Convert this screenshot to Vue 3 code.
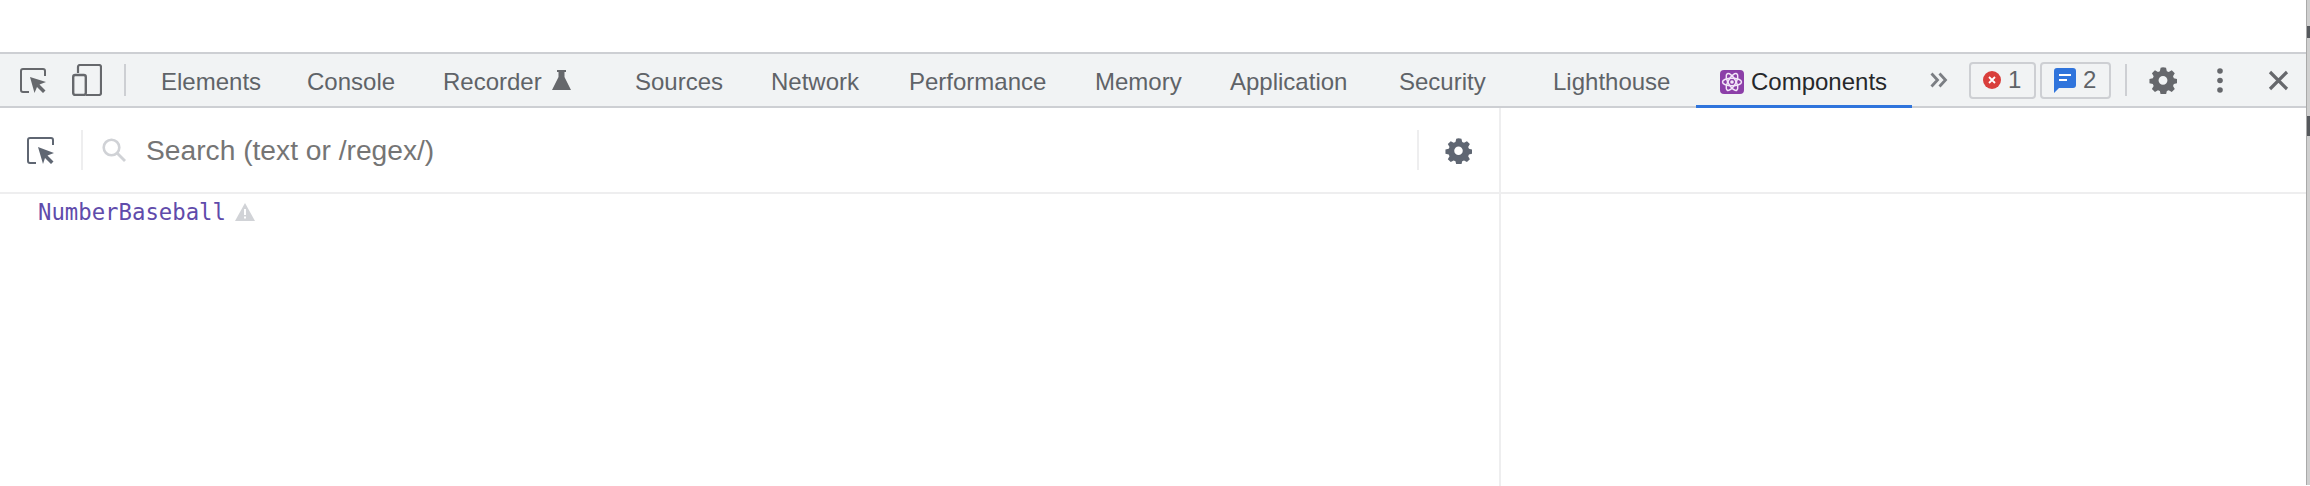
<template>
  <div class="page">
    <div class="window">
      <div class="top-gap"></div>
      <div class="toolbar">
        <button class="tool-btn first">
          <svg width="26" height="25" viewBox="0 0 26 25">
            <path d="M9 24H3a2 2 0 0 1-2-2V3a2 2 0 0 1 2-2h20a2 2 0 0 1 2 2v5" fill="none" stroke="#66686c" stroke-width="2" />
            <path d="M10 9l16 5-6.500 2.500 6 6-2.500 2.500-6-6L14.500 25z" fill="#66686c" />
          </svg>
        </button>
        <button class="tool-btn device">
          <svg width="30" height="32" viewBox="0 0 30 32">
            <path d="M6 9V3a2 2 0 0 1 2-2h19a2 2 0 0 1 2 2v26a2 2 0 0 1-2 2H14" fill="none" stroke="#66686c" stroke-width="2.200" />
            <rect x="1.200" y="11" width="12.600" height="20" rx="2" fill="none" stroke="#66686c" stroke-width="2.400" />
          </svg>
        </button>
        <span class="sep"></span>

        <nav class="tabs">
          <a v-for="tab in tabs" :key="tab.name" class="tab" :class="tab.cls">
            <svg v-if="tab.react" class="react" width="24" height="24" viewBox="0 0 24 24">
              <rect width="24" height="24" rx="4" fill="#8c3fa8" />
              <g fill="none" stroke="#f3e6f8" stroke-width="1.500">
                <ellipse cx="12" cy="12" rx="9.500" ry="3.800" />
                <ellipse cx="12" cy="12" rx="9.500" ry="3.800" transform="rotate(60 12 12)" />
                <ellipse cx="12" cy="12" rx="9.500" ry="3.800" transform="rotate(120 12 12)" />
              </g>
              <circle cx="12" cy="12" r="1.800" fill="#f3e6f8" />
            </svg>
            {{ tab.name }}
            <svg v-if="tab.flask" class="flask" width="19" height="20" viewBox="0 0 19 20">
              <path d="M5 0h9v2h-1.500v5L19 20H0L6.500 7V2H5z" fill="#66686c" />
            </svg>
          </a>
        </nav>

        <div class="right-tools">
          <svg class="chevrons" width="18" height="16" viewBox="0 0 18 16">
            <path d="M1.500 1.500L7.500 8l-6 6.500M9.500 1.500L15.500 8l-6 6.500" fill="none" stroke="#7b7e83" stroke-width="2.800" />
          </svg>
          <div class="counter errors">
            <svg width="18" height="18" viewBox="0 0 18 18">
              <circle cx="9" cy="9" r="9" fill="#d93f3c" />
              <path d="M6 6l6 6M12 6l-6 6" stroke="#fff" stroke-width="1.800" />
            </svg>
            <span>1</span>
          </div>
          <div class="counter messages">
            <svg width="22" height="25" viewBox="0 0 22 25">
              <path d="M3 0h16a3 3 0 0 1 3 3v14a3 3 0 0 1-3 3H5l-5 5V3a3 3 0 0 1 3-3z" fill="#2f74dc" />
              <path d="M5 7h12M5 12h8" stroke="#fff" stroke-width="2" />
            </svg>
            <span>2</span>
          </div>
          <span class="sep right-sep"></span>
          <svg class="gear" width="28" height="28" viewBox="0 0 24 24">
            <path :d="gearPath" fill="#66686c" fill-rule="evenodd" />
          </svg>
          <svg class="dots" width="8" height="25" viewBox="0 0 8 25">
            <circle cx="4" cy="3" r="2.800" fill="#66686c" />
            <circle cx="4" cy="12.500" r="2.800" fill="#66686c" />
            <circle cx="4" cy="22" r="2.800" fill="#66686c" />
          </svg>
          <svg class="close" width="21" height="21" viewBox="0 0 21 21">
            <path d="M2 2l17 17M19 2L2 19" stroke="#66686c" stroke-width="3.200" />
          </svg>
        </div>
      </div>

      <div class="panels">
        <section class="tree-panel">
          <div class="search-bar">
            <svg class="inspect" width="27" height="27" viewBox="0 0 27 27">
              <path d="M9 26H3a2 2 0 0 1-2-2V3a2 2 0 0 1 2-2h21a2 2 0 0 1 2 2v5" fill="none" stroke="#5f6672" stroke-width="2" />
              <path d="M11 10l16 6-6.500 2.500 6 6-2.500 2.500-6-6-2 6z" fill="#5f6672" />
            </svg>
            <span class="search-sep"></span>
            <svg class="glass" width="24" height="24" viewBox="0 0 24 24">
              <circle cx="9.500" cy="9.500" r="7.800" fill="none" stroke="#d0d2d6" stroke-width="2.600" />
              <path d="M15 15l8 8" stroke="#d0d2d6" stroke-width="2.800" />
            </svg>
            <span class="search-text">Search (text or /regex/)</span>
            <span class="search-sep end"></span>
            <svg class="search-gear" width="27" height="27" viewBox="0 0 24 24">
              <path :d="gearPath" fill="#5f6672" fill-rule="evenodd" />
            </svg>
          </div>
          <div class="tree">
            <span class="node-name">NumberBaseball</span>
            <svg class="warn" width="20" height="18" viewBox="0 0 20 18">
              <path d="M10 0l10 18H0z" fill="#d1d3d7" />
              <path d="M9 6h2v6H9zM9 13.500h2v2H9z" fill="#fff" />
            </svg>
          </div>
        </section>
        <section class="props-panel">
          <div class="props-head"></div>
        </section>
      </div>
    </div>
    <div class="edge"></div>
  </div>
</template>

<script setup>
const tabs = [
  { name: 'Elements' },
  { name: 'Console' },
  { name: 'Recorder', flask: true },
  { name: 'Sources' },
  { name: 'Network' },
  { name: 'Performance' },
  { name: 'Memory' },
  { name: 'Application' },
  { name: 'Security' },
  { name: 'Lighthouse' },
  { name: 'Components', react: true, cls: 'active' },
]

const gearPath =
  'M12 1l2.600.6.700 2.900 1.600.7 2.600-1.500 2.600 2.600-1.500 2.500.7 1.700 2.900.7v3.600l-2.900.7-.7 1.700 1.500 2.500-2.600 2.600-2.600-1.500-1.600.7-.7 2.900H10l-.7-2.900-1.600-.7-2.600 1.500-2.600-2.600 1.500-2.500-.7-1.700-2.900-.7v-3.600l2.900-.7.700-1.700-1.500-2.500 2.600-2.600 2.600 1.500 1.600-.7.700-2.900zM12 8.500a3.800 3.800 0 1 0 0 7.600 3.800 3.800 0 0 0 0-7.600z'
</script>

<style scoped>
.page {
  display: flex;
  width: 2310px;
  height: 486px;
  background: #fff;
  font-family: "Liberation Sans", Arial, sans-serif;
}

.window {
  width: 2306px;
  display: flex;
  flex-direction: column;
}

/* sliver of the window behind, cut off at the edge of the shot */
.edge {
  width: 4px;
  height: 485px;
  border-left: 1px solid #a9a9a9;
  box-sizing: border-box;
  background:
    linear-gradient(#55585c, #55585c) 0 26px / 3px 12px no-repeat,
    linear-gradient(#55585c, #55585c) 0 116px / 3px 20px no-repeat,
    #cfcfcf;
}

.top-gap {
  height: 52px;
}

.toolbar {
  height: 52px;
  box-sizing: content-box;
  display: flex;
  align-items: center;
  background: #f1f3f4;
  border-top: 2px solid #cdcfd3;
  border-bottom: 2px solid #cdcfd3;
}

.tool-btn {
  padding: 0;
  border: none;
  background: none;
  display: flex;
}

.tool-btn.first {
  margin-left: 20px;
}

.tool-btn.device {
  margin-left: 26px;
}

.sep {
  width: 2px;
  height: 32px;
  margin-left: 22px;
  background: #cdcfd3;
}

.tabs {
  display: grid;
  grid-template-columns: 146px 136px 192px 136px 138px 186px 135px 169px 154px 167px 216px;
  height: 100%;
  margin-left: 11px;
}

.tab {
  display: flex;
  align-items: center;
  padding: 2px 0 0 24px;
  font-size: 24px;
  color: #5f6368;
  white-space: nowrap;
}

.flask {
  margin-left: 10px;
  margin-bottom: 5px;
}

.tab.active {
  color: #26282b;
  height: 54px;
  padding-top: 5px;
  box-sizing: border-box;
  border-bottom: 3px solid #2f74dc;
}

.react {
  margin-right: 7px;
}

.right-tools {
  display: flex;
  align-items: center;
  margin-left: 18px;
}

.chevrons {
  flex: none;
}

.counter {
  height: 37px;
  box-sizing: border-box;
  display: flex;
  align-items: center;
  border: 2px solid #cdcfd3;
  border-radius: 4px;
  font-size: 24px;
  color: #5f6368;
}

.errors {
  width: 67px;
  margin-left: 21px;
  padding-left: 12px;
  gap: 7px;
}

.messages {
  width: 71px;
  margin-left: 4px;
  padding-left: 12px;
  gap: 7px;
}

.right-sep {
  margin-left: 14px;
}

.gear {
  margin-left: 22px;
}

.dots {
  margin-left: 39px;
}

.close {
  margin-left: 44px;
}

.panels {
  flex: 1;
  display: flex;
}

.tree-panel {
  width: 1499px;
  border-right: 2px solid #eeeeef;
}

.search-bar {
  height: 84px;
  display: flex;
  align-items: center;
  border-bottom: 2px solid #eeeeef;
  box-sizing: content-box;
}

.inspect {
  margin-left: 27px;
}

.search-sep {
  width: 2px;
  height: 40px;
  margin-left: 27px;
  background: #eeeeef;
}

.glass {
  margin-left: 19px;
}

.search-text {
  margin-left: 20px;
  font-size: 28.200px;
  color: #757575;
}

.search-sep.end {
  margin-left: auto;
}

.search-gear {
  margin-left: 26px;
  margin-right: 27px;
}

.tree {
  display: flex;
  align-items: center;
  padding: 5px 0 0 38px;
}

.node-name {
  font-family: "DejaVu Sans Mono", monospace;
  font-size: 22.300px;
  line-height: 26px;
  color: #5f4bab;
}

.warn {
  margin-left: 9px;
}

.props-panel {
  flex: 1;
}

.props-head {
  height: 84px;
  border-bottom: 2px solid #eeeeef;
  box-sizing: content-box;
}
</style>
